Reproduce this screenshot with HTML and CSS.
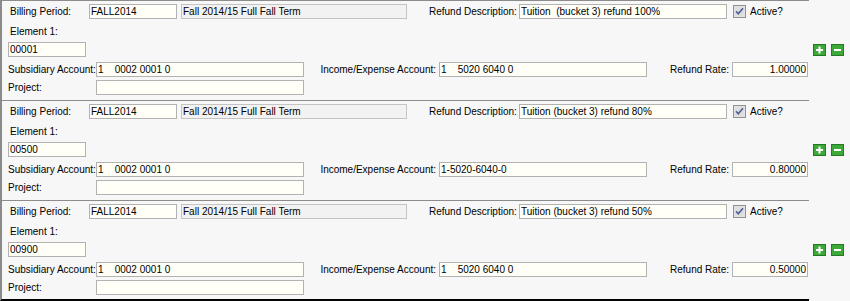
FILE: index.html
```html
<!DOCTYPE html>
<html lang="en">
<head>
  <meta charset="UTF-8" />
  <title>Refund Schedule</title>
  <link rel="stylesheet" href="styles.css">
</head>
<body>

  <div class="records">

    <!-- Record 1 -->
    <div class="record">
      <div class="record-body">
        <div class="row-top">
          <span class="lbl lbl-period">Billing Period:</span>
          <input class="fld fld-period" value="FALL2014">
          <input class="fld fld-term" value="Fall 2014/15 Full Fall Term" disabled>
          <span class="lbl lbl-desc">Refund Description:</span>
          <input class="fld fld-desc" value="Tuition  (bucket 3) refund 100%">
          <span class="chk"><svg width="13" height="13" viewBox="0 0 13 13"><rect x="0.5" y="0.5" width="12" height="12" fill="#e9e9e9" stroke="#8f9090"/><rect x="1.5" y="1.5" width="10" height="10" fill="#dedede"/><path d="M3 6.2 L5.3 8.7 L10 3.3" fill="none" stroke="#4d5e9a" stroke-width="1.6"/></svg></span>
          <span class="lbl lbl-active">Active?</span>
        </div>
        <div class="lbl row-elem-label">Element 1:</div>
        <input class="fld fld-elem" value="00001">
        <div class="row-acct">
          <span class="lbl">Subsidiary Account:</span>
          <input class="fld" value="1    0002 0001 0">
          <span class="lbl lbl-inc">Income/Expense Account:</span>
          <input class="fld" value="1    5020 6040 0">
          <span class="lbl lbl-rate">Refund Rate:</span>
          <input class="fld fld-rate" value="1.00000">
        </div>
        <div class="row-proj">
          <span class="lbl">Project:</span>
          <input class="fld" value="">
        </div>
      </div>
      <div class="record-tools">
        <span class="tool"><svg width="13" height="12" viewBox="0 0 13 12"><rect x="0.5" y="0.5" width="12" height="11" fill="#3fa83b" stroke="#247a23"/><path d="M6.5 2.5 V9.5 M3 6 H10" stroke="#fff" stroke-width="2"/></svg></span>
        <span class="tool"><svg width="13" height="12" viewBox="0 0 13 12"><rect x="0.5" y="0.5" width="12" height="11" fill="#3fa83b" stroke="#247a23"/><path d="M3 6 H10" stroke="#fff" stroke-width="2"/></svg></span>
      </div>
    </div>

    <!-- Record 2 -->
    <div class="record">
      <div class="record-body">
        <div class="row-top">
          <span class="lbl lbl-period">Billing Period:</span>
          <input class="fld fld-period" value="FALL2014">
          <input class="fld fld-term" value="Fall 2014/15 Full Fall Term" disabled>
          <span class="lbl lbl-desc">Refund Description:</span>
          <input class="fld fld-desc" value="Tuition (bucket 3) refund 80%">
          <span class="chk"><svg width="13" height="13" viewBox="0 0 13 13"><rect x="0.5" y="0.5" width="12" height="12" fill="#e9e9e9" stroke="#8f9090"/><rect x="1.5" y="1.5" width="10" height="10" fill="#dedede"/><path d="M3 6.2 L5.3 8.7 L10 3.3" fill="none" stroke="#4d5e9a" stroke-width="1.6"/></svg></span>
          <span class="lbl lbl-active">Active?</span>
        </div>
        <div class="lbl row-elem-label">Element 1:</div>
        <input class="fld fld-elem" value="00500">
        <div class="row-acct">
          <span class="lbl">Subsidiary Account:</span>
          <input class="fld" value="1    0002 0001 0">
          <span class="lbl lbl-inc">Income/Expense Account:</span>
          <input class="fld" value="1-5020-6040-0">
          <span class="lbl lbl-rate">Refund Rate:</span>
          <input class="fld fld-rate" value="0.80000">
        </div>
        <div class="row-proj">
          <span class="lbl">Project:</span>
          <input class="fld" value="">
        </div>
      </div>
      <div class="record-tools">
        <span class="tool"><svg width="13" height="12" viewBox="0 0 13 12"><rect x="0.5" y="0.5" width="12" height="11" fill="#3fa83b" stroke="#247a23"/><path d="M6.5 2.5 V9.5 M3 6 H10" stroke="#fff" stroke-width="2"/></svg></span>
        <span class="tool"><svg width="13" height="12" viewBox="0 0 13 12"><rect x="0.5" y="0.5" width="12" height="11" fill="#3fa83b" stroke="#247a23"/><path d="M3 6 H10" stroke="#fff" stroke-width="2"/></svg></span>
      </div>
    </div>

    <!-- Record 3 -->
    <div class="record last">
      <div class="record-body">
        <div class="row-top">
          <span class="lbl lbl-period">Billing Period:</span>
          <input class="fld fld-period" value="FALL2014">
          <input class="fld fld-term" value="Fall 2014/15 Full Fall Term" disabled>
          <span class="lbl lbl-desc">Refund Description:</span>
          <input class="fld fld-desc" value="Tuition (bucket 3) refund 50%">
          <span class="chk"><svg width="13" height="13" viewBox="0 0 13 13"><rect x="0.5" y="0.5" width="12" height="12" fill="#e9e9e9" stroke="#8f9090"/><rect x="1.5" y="1.5" width="10" height="10" fill="#dedede"/><path d="M3 6.2 L5.3 8.7 L10 3.3" fill="none" stroke="#4d5e9a" stroke-width="1.6"/></svg></span>
          <span class="lbl lbl-active">Active?</span>
        </div>
        <div class="lbl row-elem-label">Element 1:</div>
        <input class="fld fld-elem" value="00900">
        <div class="row-acct">
          <span class="lbl">Subsidiary Account:</span>
          <input class="fld" value="1    0002 0001 0">
          <span class="lbl lbl-inc">Income/Expense Account:</span>
          <input class="fld" value="1    5020 6040 0">
          <span class="lbl lbl-rate">Refund Rate:</span>
          <input class="fld fld-rate" value="0.50000">
        </div>
        <div class="row-proj">
          <span class="lbl">Project:</span>
          <input class="fld" value="">
        </div>
      </div>
      <div class="record-tools">
        <span class="tool"><svg width="13" height="12" viewBox="0 0 13 12"><rect x="0.5" y="0.5" width="12" height="11" fill="#3fa83b" stroke="#247a23"/><path d="M6.5 2.5 V9.5 M3 6 H10" stroke="#fff" stroke-width="2"/></svg></span>
        <span class="tool"><svg width="13" height="12" viewBox="0 0 13 12"><rect x="0.5" y="0.5" width="12" height="11" fill="#3fa83b" stroke="#247a23"/><path d="M3 6 H10" stroke="#fff" stroke-width="2"/></svg></span>
      </div>
    </div>

  </div>

</body>
</html>
```

FILE: styles.css
```css
* { box-sizing: border-box; margin: 0; padding: 0; }
body {
  font-family: 'Liberation Sans', Arial, sans-serif; font-size: 10px;
  background: #f7f7f7; color: #000;
}
.records { width: 850px; }

.record { display: flex; }
.record-body {
  width: 809px; height: 100px;
  border-left: 2px solid #8a8a8a; border-top: 1px solid #8c8c8c;
  padding: 3px 0 0 0;
}
.record.last .record-body { height: 101px; border-bottom: 2px solid #000; }
.record-tools {
  display: flex; gap: 5px; align-items: flex-start;
  padding: 44px 0 0 4px;
}
.tool svg { display: block; }

.lbl { white-space: nowrap; line-height: 15px; }

.fld {
  display: block; height: 15px; padding: 0 1px;
  font-family: inherit; font-size: 10px; color: #000;
  background: #fffff8; border: 1px solid #b2b2b2;
  white-space: pre; outline: none;
}
.fld:disabled { background: #f2f2f2; border-color: #c4c4c4; color: #000; }

.row-top {
  display: flex; align-items: center; height: 15px;
  padding-left: 8px;
}
.lbl-period { width: 79px; }
.fld-period { width: 88px; }
.fld-term { width: 226px; margin-left: 4px; }
.lbl-desc { width: 90px; margin-left: 22px; }
.fld-desc { width: 208px; }
.chk { margin-left: 6px; height: 13px; }
.chk svg { display: block; }
.lbl-active { margin-left: 4px; }

.row-elem-label { margin: 6px 0 0 8px; height: 14px; line-height: 14px; }
.fld-elem { width: 78px; margin: 3px 0 0 6px; }

.row-acct, .row-proj {
  display: grid; align-items: center;
  grid-template-columns: 88px 208px 118px 208px 64px 76px;
  padding-left: 6px;
}
.row-acct { margin-top: 5px; }
.row-proj { margin-top: 3px; }
.lbl-inc { margin-left: 17px; }
.lbl-rate { margin-left: 21px; }
.fld-rate { text-align: right; }
.row-acct .fld, .row-proj .fld { width: 100%; }
.row-acct .lbl-inc + .fld { width: 208px; }
.row-acct { grid-template-columns: 88px 208px 135px 208px 85px 76px; }
.row-acct .lbl-inc, .row-acct .lbl-rate { justify-self: end; margin-left: 0; padding-right: 3px; }
```
